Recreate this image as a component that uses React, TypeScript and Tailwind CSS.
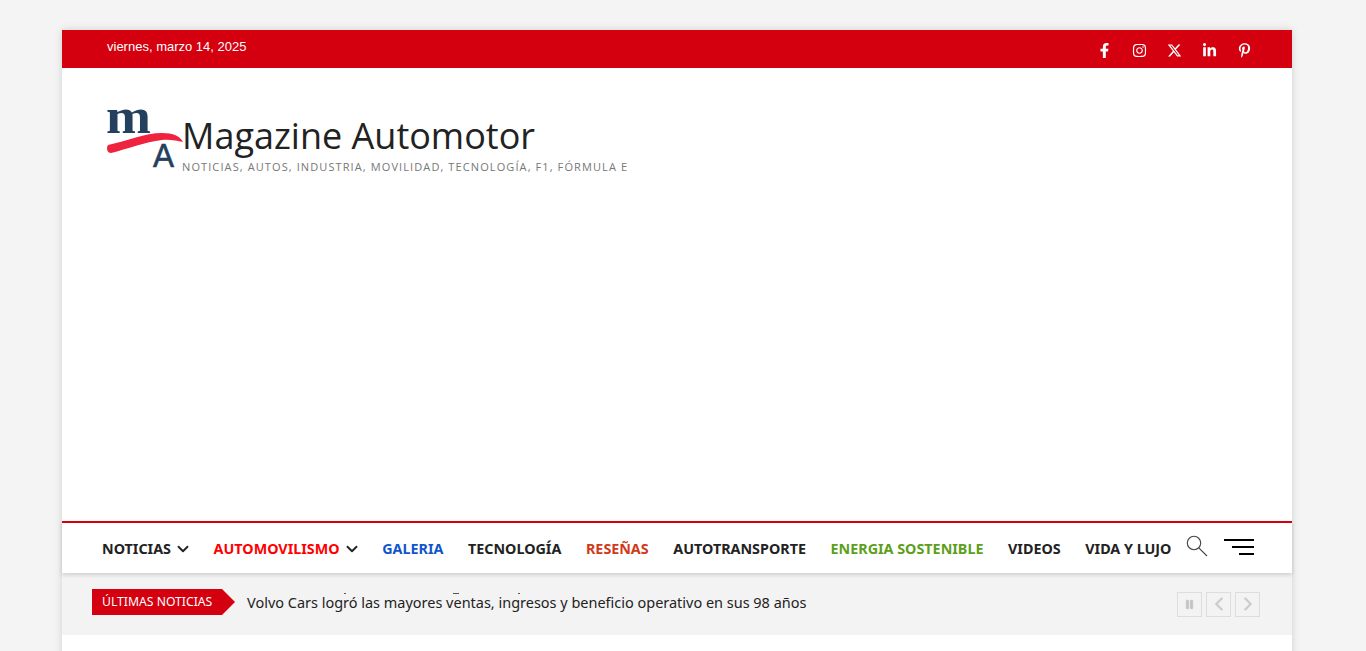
import React from "react";
import { FaFacebookF, FaInstagram, FaLinkedinIn, FaPinterestP } from "react-icons/fa";
import { FaXTwitter } from "react-icons/fa6";
import { ChevronDown, ChevronLeft, ChevronRight, Pause } from "lucide-react";

const OS = { fontFamily: '"Open Sans", sans-serif' };
const NS = { fontFamily: '"Noto Sans", sans-serif' };

const nav = [
  { t: "NOTICIAS", c: "text-[#222222]", d: true },
  { t: "AUTOMOVILISMO", c: "text-[#ff0000]", d: true },
  { t: "GALERIA", c: "text-[#1155cc]" },
  { t: "TECNOLOGÍA", c: "text-[#222222]" },
  { t: "RESEÑAS", c: "text-[#d03a1a]" },
  { t: "AUTOTRANSPORTE", c: "text-[#222222]" },
  { t: "ENERGIA SOSTENIBLE", c: "text-[#5b9f1a]" },
  { t: "VIDEOS", c: "text-[#222222]" },
  { t: "VIDA Y LUJO", c: "text-[#222222]" },
];

function Logo() {
  return (
    <svg width="76" height="62" viewBox="0 0 76 62" className="shrink-0 overflow-visible">
      <text x="-1" y="25" fontFamily='"Liberation Serif", serif' fontWeight="700" fontSize="50" fill="#24405f" textLength="45" lengthAdjust="spacingAndGlyphs">m</text>
      <path d="M1 37 C 20 33, 38 25, 55 25 C 66 25, 73 28, 76 34 C 70 33, 63 31, 55 32 C 38 34, 20 41, 4 45 C 0 45, -1 40, 1 37 Z" fill="#f0233f" />
      <text x="46" y="59" fontFamily='"Liberation Sans", sans-serif' fontSize="34" fill="#24405f" stroke="#24405f" strokeWidth="0.6" textLength="21" lengthAdjust="spacingAndGlyphs">A</text>
    </svg>
  );
}

export default function App() {
  return (
    <div className="h-[651px] overflow-hidden bg-[#f4f4f4] pt-[30px]">
      <div className="mx-[62px] h-[700px] w-[1230px] bg-white shadow-[0_0_8px_rgba(0,0,0,0.15)]" style={OS}>
        <div className="flex h-[38px] items-start justify-between bg-[#d4000f] pl-[45px] pr-[40px] text-white">
          <span className="mt-[9px] text-[13px] leading-[16px]" style={{ fontFamily: '"Liberation Sans", sans-serif' }}>
            viernes, marzo 14, 2025
          </span>
          <div className="mt-[13px] flex items-center gap-[20px]">
            <FaFacebookF className="h-[15px] w-[15px]" />
            <FaInstagram className="h-[15px] w-[15px]" />
            <FaXTwitter className="h-[15px] w-[15px]" />
            <FaLinkedinIn className="h-[15px] w-[15px]" />
            <FaPinterestP className="h-[15px] w-[15px]" />
          </div>
        </div>

        <div className="flex h-[453px] items-start pl-[45px] pt-[40px]">
          <Logo />
          <div className="-ml-[1px] pt-[5px]">
            <div className="text-[36px] leading-[46px] text-[#222222]">Magazine Automotor</div>
            <div className="text-[11px] leading-[16px] tracking-[1.1px] text-[#777777]">
              NOTICIAS, AUTOS, INDUSTRIA, MOVILIDAD, TECNOLOGÍA, F1, FÓRMULA E
            </div>
          </div>
        </div>

        <div className="relative z-10 flex h-[52px] items-center border-t-2 border-[#d4000f] bg-white pl-[40px] shadow-[0_2px_4px_rgba(0,0,0,0.15)]" style={NS}>
          <div className="flex items-center gap-[24.6px] pt-[2px]">
            {nav.map((n) => (
              <span key={n.t} className={`flex items-center gap-[3px] text-[14.33px] font-bold leading-[20px] ${n.c}`}>
                {n.t}
                {n.d && <ChevronDown className="-mr-[3px] h-[18px] w-[18px] text-[#222222]" strokeWidth={2.5} />}
              </span>
            ))}
          </div>
          <svg width="22" height="22" viewBox="0 0 22 22" fill="none" stroke="#444444" className="ml-[15px] -mt-[5px]">
            <circle cx="8" cy="8" r="6.7" strokeWidth="1.1" />
            <line x1="12.8" y1="12.8" x2="21" y2="21" strokeWidth="1.1" />
          </svg>
          <div className="ml-[16px] -mt-[3px] flex w-[30px] flex-col items-end gap-[5px]">
            <span className="h-[2px] w-[30px] bg-black" />
            <span className="h-[2px] w-[22px] bg-black" />
            <span className="h-[2px] w-[15px] bg-black" />
          </div>
        </div>

        <div className="relative flex h-[62px] items-center bg-[#f3f3f3] pl-[30px] pr-[32px]" style={NS}>
          <div className="-mt-[4px] flex h-[26px] items-center">
            <span className="flex h-[26px] w-[130px] items-center bg-[#d4000f] pl-[10px] pt-[1px] text-[12.2px] text-white">ÚLTIMAS NOTICIAS</span>
            <span className="h-0 w-0 border-y-[13px] border-l-[13px] border-y-transparent border-l-[#d4000f]" />
          </div>
          <span className="-mt-[2px] ml-[12px] text-[14.47px] text-[#222222]">Volvo Cars logró las mayores ventas, ingresos y beneficio operativo en sus 98 años</span>
          <span className="absolute left-[282px] top-[20px] h-[1px] w-[2px] bg-[#555555]" />
          <span className="absolute left-[391px] top-[20px] h-[1px] w-[6px] bg-[#555555]" />
          <span className="absolute left-[456px] top-[20px] h-[1px] w-[2px] bg-[#555555]" />
          <div className="ml-auto flex gap-[4px]">
            <span className="flex h-[25px] w-[25px] items-center justify-center border border-[#dddddd]">
              <Pause className="h-[11px] w-[11px] text-[#c4c4c4]" fill="#c4c4c4" />
            </span>
            <span className="flex h-[25px] w-[25px] items-center justify-center border border-[#dddddd]">
              <ChevronLeft className="h-[22px] w-[22px] text-[#cccccc]" strokeWidth={2.5} />
            </span>
            <span className="flex h-[25px] w-[25px] items-center justify-center border border-[#dddddd]">
              <ChevronRight className="h-[22px] w-[22px] text-[#cccccc]" strokeWidth={2.5} />
            </span>
          </div>
        </div>
      </div>
    </div>
  );
}
